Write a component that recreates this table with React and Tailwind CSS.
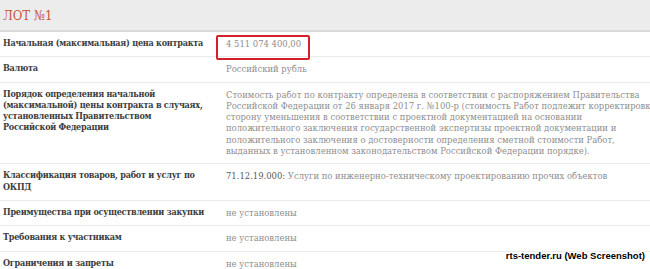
import React from 'react';

const rows = [
    {
        label: ['Начальная (максимальная) цена контракта'],
        value: ['4 511 074 400,00'],
        highlight: true,
    },
    {
        label: ['Валюта'],
        value: ['Российский рубль'],
    },
    {
        label: [
            'Порядок определения начальной',
            '(максимальной) цены контракта в случаях,',
            'установленных Правительством',
            'Российской Федерации',
        ],
        value: [
            'Стоимость работ по контракту определена в соответствии с распоряжением Правительства',
            'Российской Федерации от 26 января 2017 г. №100-р (стоимость Работ подлежит корректировке',
            'сторону уменьшения в соответствии с проектной документацией на основании',
            'положительного заключения государственной экспертизы проектной документации и',
            'положительного заключения о достоверности определения сметной стоимости Работ,',
            'выданных в установленном законодательством Российской Федерации порядке).',
        ],
    },
    {
        label: ['Классификация товаров, работ и услуг по', 'ОКПД'],
        code: '71.12.19.000:',
        value: ['Услуги по инженерно-техническому проектированию прочих объектов'],
    },
    {
        label: ['Преимущества при осуществлении закупки'],
        value: ['не установлены'],
    },
    {
        label: ['Требования к участникам'],
        value: ['не установлены'],
    },
    {
        label: ['Ограничения и запреты'],
        value: ['не установлены'],
    },
];

const Row = ({ row }) => (
    <div className="grid grid-cols-[226px_1fr] border-b border-[#ebebeb] pt-[6px] pb-[7px] leading-[11.3px]">
        <div className="pl-[3px] font-bold text-[9px] tracking-[-0.25px] text-[#3c3c3c]">
            {row.label.map((line, i) => (
                <div key={i} className="whitespace-nowrap">{line}</div>
            ))}
        </div>
        <div className="relative text-[9.4px] text-[#8e8e8e]">
            {row.value.map((line, i) => (
                <div key={i} className="whitespace-nowrap">
                    {i === 0 && row.code && <span className="text-[#5a5a5a]">{row.code} </span>}
                    {line}
                </div>
            ))}
            {row.highlight && (
                <div className="absolute left-[-10px] top-[-3px] w-[94px] h-[25px] border-2 border-[#d4202c] rounded-[2px]" />
            )}
        </div>
    </div>
);

export default function App() {
    return (
        <div className="relative w-[650px] h-[269px] overflow-hidden bg-white font-['DejaVu_Serif',serif] font-stretch-condensed">
            <div className="h-[32px] bg-[#ececec] border-b-2 border-[#d9d9d9] flex items-center pl-[3px]">
                <h1 className="text-[13px] text-[#c4553a] pt-[2px]">ЛОТ №1</h1>
            </div>
            {rows.map((row, i) => (
                <Row key={i} row={row} />
            ))}
            <div className="absolute right-[5px] bottom-[6px] font-['Liberation_Sans',sans-serif] font-bold text-[9.5px] text-black [text-shadow:-1px_-1px_0_#fff,1px_-1px_0_#fff,-1px_1px_0_#fff,1px_1px_0_#fff]">
                rts-tender.ru (Web Screenshot)
            </div>
        </div>
    );
}
